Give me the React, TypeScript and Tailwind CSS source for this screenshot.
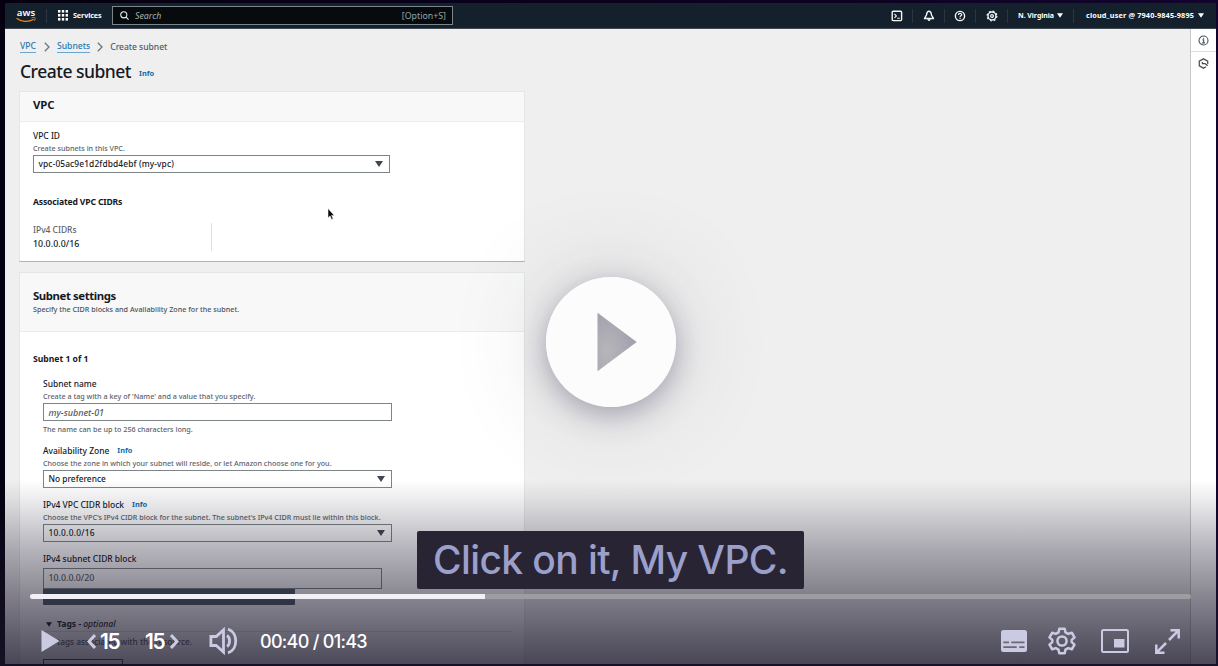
import type { ReactNode } from "react";

const Caret = ({ className = "" }: { className?: string }) => (
  <svg viewBox="0 0 8 6" className={className} aria-hidden>
    <path d="M0 0h8L4 6z" fill="currentColor" />
  </svg>
);

const Info = () => (
  <span className="ml-[8px] text-[7.4px] font-bold text-[#0f6cab]">Info</span>
);

const Label = ({ children }: { children: ReactNode }) => (
  <div className="flex h-[12px] items-center text-[8.45px] font-medium text-[#16191f]">{children}</div>
);

const Hint = ({ children }: { children: ReactNode }) => (
  <div className="flex h-[12px] items-center text-[7.2px] font-medium text-[#5b636b]">{children}</div>
);

const Select = ({ children, width }: { children: ReactNode; width: string }) => (
  <div className={`flex h-[18px] items-center justify-between border border-[#7d8588] bg-white pr-[6px] pl-[4.5px] text-[8.4px] font-medium text-[#16191f] ${width}`}>
    {children}
    <Caret className="h-[6px] w-[8px] text-[#414750]" />
  </div>
);

const HeaderIcon = ({ children }: { children: ReactNode }) => (
  <svg viewBox="0 0 12 12" className="h-[12px] w-[12px]" fill="none" stroke="#f4f6f7" strokeWidth="1.4" aria-hidden>
    {children}
  </svg>
);

const Rule = ({ className = "" }: { className?: string }) => (
  <span className={`h-[14px] w-px bg-[#2b3642] ${className}`} />
);

function TopBar() {
  return (
    <header className="flex h-[26px] shrink-0 items-center border-b border-[#414a53] bg-[#14202c] text-white">
      <div className="ml-[11px] flex h-[16px] w-[20px] flex-col items-center">
        <span className="h-[9px] text-[9.6px] leading-[9px] font-semibold">aws</span>
        <svg viewBox="0 0 20 6" className="h-[6px] w-[20px] shrink-0" fill="none" stroke="#e88b1a" aria-hidden>
          <path d="M0.600 1.200c5 4.100 12 4.200 17 1.100" strokeWidth="1.300" />
          <path d="M15.600.8c1.300-.6 3-.6 3.500-.1.300.8-.3 2.400-1.200 3.300" />
        </svg>
      </div>
      <Rule className="ml-[10px]" />
      <svg viewBox="0 0 10 11" className="ml-[11px] h-[11px] w-[10px]" fill="#fff" aria-hidden>
        {[0, 4, 8].map((y) => [0, 3.8, 7.6].map((x) => <rect key={`${x}-${y}`} x={x} y={y} width="2.4" height="2.6" />))}
      </svg>
      <span className="ml-[5px] w-[28px] text-[7.200px] font-bold tracking-[-0.100px] whitespace-nowrap">Services</span>
      <div className="ml-[11px] flex h-[19px] w-[341px] items-center border border-[#7b858c] bg-[#070b0e] pr-[6px] pl-[7px]">
        <svg viewBox="0 0 10 10" className="h-[9px] w-[9px]" fill="none" stroke="#e8ecec" strokeWidth="1.200" aria-hidden>
          <circle cx="4.200" cy="4.200" r="3.400" />
          <path d="M6.700 6.700l2.800 2.800" />
        </svg>
        <span className="mt-[2px] ml-[6px] text-[8.800px] text-[#a3b1b0] italic">Search</span>
        <span className="mt-[2px] ml-auto text-[8.800px] text-[#95a5a6]">[Option+S]</span>
      </div>
      <div className="mr-[12px] ml-auto flex items-center">
        <HeaderIcon>
          <rect x="1.200" y="1.200" width="9.400" height="9.400" rx="1" />
          <path d="M3.400 4l2 1.900-2 1.900M6.200 8.300h2.600" strokeWidth="1.100" />
        </HeaderIcon>
        <Rule className="mr-[10px] ml-[9px]" />
        <HeaderIcon>
          <path d="M6 1.200c-1.300 0-2.100 1.200-2.300 3C3.500 6.200 1.800 6.900 1.600 8.500h8.800C10.200 6.900 8.500 6.200 8.300 4.200 8.100 2.400 7.300 1.200 6 1.200z" />
          <path d="M4.700 9.400c.2 1.800 2.400 1.800 2.600 0z" fill="#f4f6f7" strokeWidth=".6" />
        </HeaderIcon>
        <Rule className="mr-[9px] ml-[9px]" />
        <HeaderIcon>
          <circle cx="6" cy="6" r="4.600" />
          <path d="M4.400 4.900c0-2 3.300-2 3.300-.2 0 1.100-1.600 1.200-1.600 2.200M6.100 7.800v1.100" strokeWidth="1.200" />
        </HeaderIcon>
        <Rule className="mr-[10px] ml-[9px]" />
        <HeaderIcon>
          <circle cx="6" cy="6" r="4" />
          <circle cx="6" cy="6" r="1.400" strokeWidth="1.200" />
          <circle cx="6" cy="6" r="4.900" strokeDasharray="1.850 2" strokeWidth="1.200" />
        </HeaderIcon>
        <Rule className="ml-[9px]" />
        <span className="mt-px ml-[10px] w-[36px] text-[7px] font-bold tracking-[-0.050px] whitespace-nowrap">N. Virginia</span>
        <Caret className="ml-[3px] h-[5px] w-[6px]" />
        <Rule className="ml-[10px]" />
        <span className="ml-[12px] w-[109px] text-[7.300px] font-bold tracking-[0.150px] whitespace-nowrap">cloud_user @ 7940-9845-9895</span>
        <Caret className="ml-[3px] h-[5px] w-[6px]" />
      </div>
    </header>
  );
}

function VpcCard() {
  return (
    <section className="h-[171px] w-[506px] border border-[#e3e6e6] border-b-[#abb5b5] bg-white">
      <h2 className="flex h-[30px] items-center border-b border-[#eaeded] bg-[#f8f8f8] pb-[3px] pl-[13px] text-[11.400px] font-bold tracking-[-0.100px] text-[#16191f]">VPC</h2>
      <div className="px-[13px] pt-[8px]">
        <Label>VPC ID</Label>
        <Hint>Create subnets in this VPC.</Hint>
        <div className="pt-px">
          <Select width="w-[357px]"><span className="tracking-[0.120px]">vpc-05ac9e1d2fdbd4ebf (my-vpc)</span></Select>
        </div>
        <h3 className="mt-[22px] flex h-[14px] items-center text-[8.600px] font-bold tracking-[-0.160px] text-[#16191f]">Associated VPC CIDRs</h3>
        <div className="mt-[14px] h-[28px] w-[179px] border-r border-[#dfe2e2]">
          <div className="flex h-[14px] items-center text-[8.450px] font-medium text-[#5b636b]">IPv4 CIDRs</div>
          <div className="flex h-[14px] items-center pt-px text-[8.800px] font-medium tracking-[0.050px] text-[#16191f]">10.0.0.0/16</div>
        </div>
      </div>
    </section>
  );
}

function SubnetCard() {
  return (
    <section className="mt-[10px] h-[420px] w-[506px] border border-[#e3e6e6] bg-white">
      <div className="flex h-[59px] flex-col border-b border-[#eaeded] bg-[#f8f8f8] pt-[15px] pl-[13px]">
        <h2 className="flex h-[16px] items-center text-[11.400px] font-bold tracking-[-0.420px] text-[#16191f]">Subnet settings</h2>
        <p className="flex h-[10px] items-center text-[7.200px] font-medium text-[#4a5159]">Specify the CIDR blocks and Availability Zone for the subnet.</p>
      </div>
      <h3 className="mt-[20px] ml-[13px] flex h-[14px] items-center text-[8.600px] font-bold text-[#16191f]">Subnet 1 of 1</h3>
      <div className="mt-[12px] ml-[23px] w-[349px]">
        <Label>Subnet name</Label>
        <Hint>Create a tag with a key of &apos;Name&apos; and a value that you specify.</Hint>
        <div className="mt-px flex h-[18px] items-center border border-[#7d8588] bg-white pt-px pl-[4.500px] text-[9px] font-medium text-[#545b64] italic">my-subnet-01</div>
        <div className="mt-[2px]">
          <Hint>The name can be up to 256 characters long.</Hint>
        </div>
        <div className="mt-[10px]">
          <Label>Availability Zone<Info /></Label>
        </div>
        <Hint>Choose the zone in which your subnet will reside, or let Amazon choose one for you.</Hint>
        <div className="mt-px">
          <Select width="w-[349px]">No preference</Select>
        </div>
        <div className="mt-[11px]">
          <Label>IPv4 VPC CIDR block<Info /></Label>
        </div>
        <Hint>
          <span className="whitespace-nowrap">Choose the VPC&apos;s IPv4 CIDR block for the subnet. The subnet&apos;s IPv4 CIDR must lie within this block.</span>
        </Hint>
        <div className="mt-px">
          <Select width="w-[349px]"><span className="tracking-[0.240px]">10.0.0.0/16</span></Select>
        </div>
        <div className="mt-[11px]">
          <Label>IPv4 subnet CIDR block</Label>
        </div>
        <div className="mt-[3px] flex h-[21px] w-[339px] items-center border border-[#7d8588] bg-white pl-[4.500px] text-[8.800px] font-medium text-[#545b64]">10.0.0.0/20</div>
        <div className="h-[16px] w-[252px] rounded-b-[1px] bg-[#4a5962]" />
        <div className="mt-[12px] flex h-[14px] items-center pl-[3px] text-[8.600px] text-[#16191f]">
          <Caret className="mr-[5px] h-[5px] w-[6px]" />
          <b>Tags -</b>
          <i className="ml-[2px] font-medium">optional</i>
        </div>
        <div className="w-[469px] border-t border-[#dfe2e2] pt-[3px]">
          <div className="ml-[14px] flex h-[14px] items-center text-[8.300px] font-medium text-[#545b64]">tags associated with the resource.</div>
        </div>
        <div className="mt-[10px] h-[18px] w-[80px] border border-[#3a4147] bg-white" />
      </div>
    </section>
  );
}

function Cursor() {
  return (
    <svg viewBox="0 0 8 12" className="absolute top-[208px] left-[327px] h-[12px] w-[8px]" aria-hidden>
      <path d="M1 .5v9.300l2.100-1.900 1.500 3.500 1.500-.7-1.500-3.300h2.700z" fill="#0b0b0b" stroke="#fff" strokeWidth=".5" />
    </svg>
  );
}

function Controls() {
  return (
    <div className="absolute inset-x-0 bottom-0 h-[72px] text-[#cbcae3]">
      <div className="ml-[30px] h-[5px] w-[1161px] rounded-full bg-[#9d9ca1]">
        <div className="h-full w-[455px] rounded-l-full bg-[#f1f0f6]" />
      </div>
      <div className="flex h-[84px] items-center pr-[38px] pl-[41px]">
        <svg viewBox="0 0 19 22" className="h-[22px] w-[19px]" fill="currentColor" aria-hidden>
          <path d="M.5 0v22L18.500 11z" />
        </svg>
        <div className="ml-[27px] flex items-center">
          <svg viewBox="0 0 9 15" className="h-[15px] w-[9px]" fill="none" stroke="currentColor" strokeWidth="3" aria-hidden>
            <path d="M8 1L2 7.500 8 14" />
          </svg>
          <span className="ml-[4px] w-[21px] font-['Inter'] text-[21px] leading-none font-semibold tracking-[-1.500px] text-white">15</span>
        </div>
        <div className="ml-[24px] flex items-center">
          <span className="w-[21px] font-['Inter'] text-[21px] leading-none font-semibold tracking-[-1.500px] text-white">15</span>
          <svg viewBox="0 0 9 15" className="ml-[4px] h-[15px] w-[9px]" fill="none" stroke="currentColor" strokeWidth="3" aria-hidden>
            <path d="M1 1l6 6.500L1 14" />
          </svg>
        </div>
        <svg viewBox="0 0 29 28" className="ml-[30px] h-[28px] w-[29px]" fill="none" stroke="currentColor" strokeWidth="2.800" aria-hidden>
          <path d="M1.900 9.500h5.300l7.300-6.600v22.200l-7.300-6.600H1.900z" />
          <path d="M18 8.500c3.400 2.300 3.400 8.700 0 11" />
          <path d="M19 2.200c10.300 3 10.300 20.600 0 23.600" />
        </svg>
        <span className="ml-[22px] font-['Inter'] text-[18px] font-medium tracking-[-0.700px] whitespace-nowrap text-white">00:40 / 01:43</span>
        <div className="ml-auto flex items-center">
          <svg viewBox="0 0 26 22" className="h-[22px] w-[26px]" aria-hidden>
            <rect width="26" height="22" rx="2.500" fill="currentColor" />
            <path d="M2.300 12.300H8M10.300 12.300h13.200M2.300 17.200h13.400M18.300 17.200h5.200" stroke="#6a6776" strokeWidth="1.800" />
          </svg>
          <svg viewBox="0 0 28 28" className="ml-[21px] h-[28px] w-[28px]" fill="none" stroke="currentColor" strokeWidth="2.500" aria-hidden>
            <circle cx="14" cy="14" r="4.600" />
            <path d="M11.300 1.700h5.400l.8 3.700 2.700 1.500 3.600-1.200 2.700 4.700-2.800 2.500v2.200l2.800 2.500-2.700 4.700-3.600-1.200-2.700 1.500-.8 3.700h-5.400l-.8-3.700-2.700-1.500-3.600 1.200-2.700-4.700 2.800-2.500v-2.200L1.500 10.400l2.700-4.700 3.600 1.200 2.700-1.500z" strokeLinejoin="round" />
          </svg>
          <svg viewBox="0 0 28 24" className="ml-[25px] h-[24px] w-[28px]" aria-hidden>
            <rect x="1" y="1" width="26" height="22" rx="1.500" fill="none" stroke="currentColor" strokeWidth="2" />
            <rect x="13" y="10" width="10.500" height="8.500" fill="currentColor" />
          </svg>
          <svg viewBox="0 0 25 25" className="ml-[26px] h-[25px] w-[25px]" fill="none" stroke="currentColor" strokeWidth="2.500" aria-hidden>
            <path d="M15.500 1.300h8.200v8.200M23.300 1.700L14 11M9.500 23.700H1.300v-8.200M1.700 23.300L11 14" />
          </svg>
        </div>
      </div>
    </div>
  );
}

export default function App() {
  return (
    <div className="relative h-[666px] w-[1218px] overflow-hidden bg-gradient-to-r from-[#05000f] to-[#12042c] font-['Noto_Sans',sans-serif]">
      <div className="h-full pt-[3px] pr-[2px] pb-[2px] pl-[5px]">
        <div className="flex h-[661px] flex-col overflow-hidden">
          <TopBar />
          <div className="flex min-h-0 flex-1 bg-[#efefef]">
            <main className="flex-1 overflow-hidden pl-[14px]">
              <nav className="mt-[10px] ml-px flex h-[16px] items-center text-[8.600px] font-medium">
                <a className="border-b border-[#6ba6cc] leading-[11px] text-[#2a78b0]">VPC</a>
                <svg viewBox="0 0 6 10" className="mr-[7px] ml-[8px] h-[10px] w-[6px]" fill="none" stroke="#6c757a" strokeWidth="1.300"><path d="M.8.8L5 5 .8 9.200" /></svg>
                <a className="border-b border-[#6ba6cc] leading-[11px] text-[#2a78b0]">Subnets</a>
                <svg viewBox="0 0 6 10" className="mx-[7px] h-[10px] w-[6px]" fill="none" stroke="#6c757a" strokeWidth="1.300"><path d="M.8.8L5 5 .8 9.200" /></svg>
                <span className="tracking-[-0.050px] text-[#545b64]">Create subnet</span>
              </nav>
              <div className="mt-[3px] mb-[7px] ml-px flex h-[26px] items-center">
                <h1 className="text-[17.500px] font-medium tracking-[-0.500px] text-[#16191f]">Create subnet</h1>
                <span className="flex pt-[6px]"><Info /></span>
              </div>
              <VpcCard />
              <SubnetCard />
            </main>
            <aside className="flex w-[26px] flex-col items-center border-l border-[#c5c9ca] bg-white">
              <div className="flex h-[23px] w-full items-center justify-center border-b border-[#dcdfdf]">
                <svg viewBox="0 0 12 12" className="h-[11px] w-[11px]" fill="none" stroke="#4b545b" strokeWidth="1.200">
                  <circle cx="6" cy="6" r="4.900" />
                  <path d="M4.800 5.300h1.400v3M4.500 8.600h3.200M6 3v1.200" />
                </svg>
              </div>
              <svg viewBox="0 0 12 12" className="mt-[6px] h-[11px] w-[11px]" fill="none" stroke="#4b545b" strokeWidth="1.400">
                <path d="M10.600 6.900V3.500L6 .9 1.400 3.500v5L6 11.100l2.800-1.500" />
                <path d="M4.800 4.300v1.900h3l2.700 2.200" />
              </svg>
            </aside>
          </div>
        </div>
      </div>
      <Cursor />
      <div className="absolute inset-x-0 top-[480px] bottom-0 bg-[linear-gradient(to_bottom,rgba(26,22,43,0)_0%,rgba(26,22,43,0.085)_11%,rgba(26,22,43,0.32)_37%,rgba(26,22,43,0.5)_60%,rgba(26,22,43,0.79)_100%)]" />
      <div className="absolute top-[277px] left-[545.500px] h-[130px] w-[130px] rounded-full shadow-[0_8px_28px_rgba(60,50,85,0.36),0_0_100px_rgba(60,60,80,0.18)]">
        <svg viewBox="0 0 130 130" className="h-full w-full" aria-hidden>
          <defs>
            <radialGradient id="playTone" cx="25%" cy="65%" r="75%">
              <stop offset="0" stopColor="#b6b6ba" />
              <stop offset="1" stopColor="#a29eac" />
            </radialGradient>
          </defs>
          <circle cx="65" cy="65" r="65" fill="#fcfcfc" />
          <path d="M51.500 35.700v58.600L90.700 65z" fill="url(#playTone)" />
        </svg>
      </div>
      <div className="absolute top-[531px] left-[417px] flex h-[58px] w-[387px] items-center justify-center rounded-[2px] bg-[#282433] pt-px font-['Inter'] text-[39px] font-medium tracking-[-0.600px] whitespace-nowrap text-[#9ba0cb]">
        Click on it, My VPC.
      </div>
      <Controls />
    </div>
  );
}
